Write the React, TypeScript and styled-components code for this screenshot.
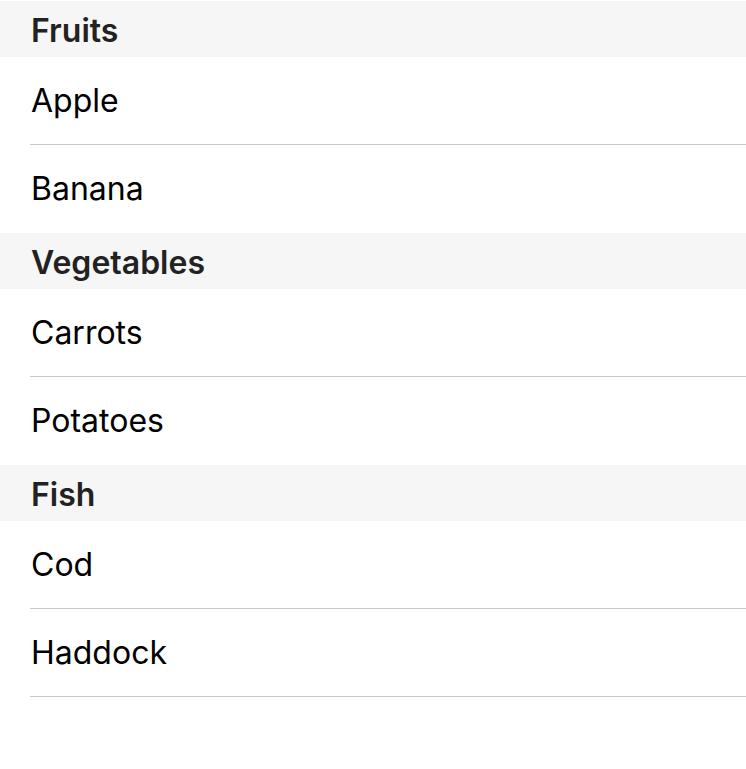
import React from "react";
import styled, { createGlobalStyle } from "styled-components";

const Global = createGlobalStyle`
  html, body { margin: 0; padding: 0; background: #fff; }
  body { font-family: Inter, "Liberation Sans", sans-serif; }
`;

const List = styled.div`
  display: flex;
  flex-direction: column;
  padding-top: 1px;
`;

const Header = styled.div`
  height: 56px;
  box-sizing: border-box;
  display: flex;
  align-items: center;
  padding-left: 31px;
  padding-top: 2px;
  background: #f6f6f6;
  color: #222;
  font-size: 32px;
  font-weight: 600;
`;

const Item = styled.div<{ $sep: boolean }>`
  height: 88px;
  box-sizing: border-box;
  display: flex;
  align-items: center;
  padding-left: 31px;
  padding-bottom: 2px;
  color: #000;
  font-size: 32px;
  font-weight: 400;
  position: relative;
  ${(p) =>
    p.$sep
      ? `
    &::after {
      content: "";
      position: absolute;
      left: 30px;
      right: 0;
      bottom: 0;
      height: 1px;
      background: #c8c8c8;
    }
  `
      : ""}
`;

const sections = [
  { title: "Fruits", items: ["Apple", "Banana"] },
  { title: "Vegetables", items: ["Carrots", "Potatoes"] },
  { title: "Fish", items: ["Cod", "Haddock"] },
];

export default function App() {
  return (
    <>
      <Global />
      <List>
        {sections.map((s, si) =>
          [
            <Header key={s.title}>{s.title}</Header>,
            ...s.items.map((it, i) => (
              <Item
                key={it}
                $sep={i < s.items.length - 1 || si === sections.length - 1}
              >
                {it}
              </Item>
            )),
          ]
        )}
      </List>
    </>
  );
}
